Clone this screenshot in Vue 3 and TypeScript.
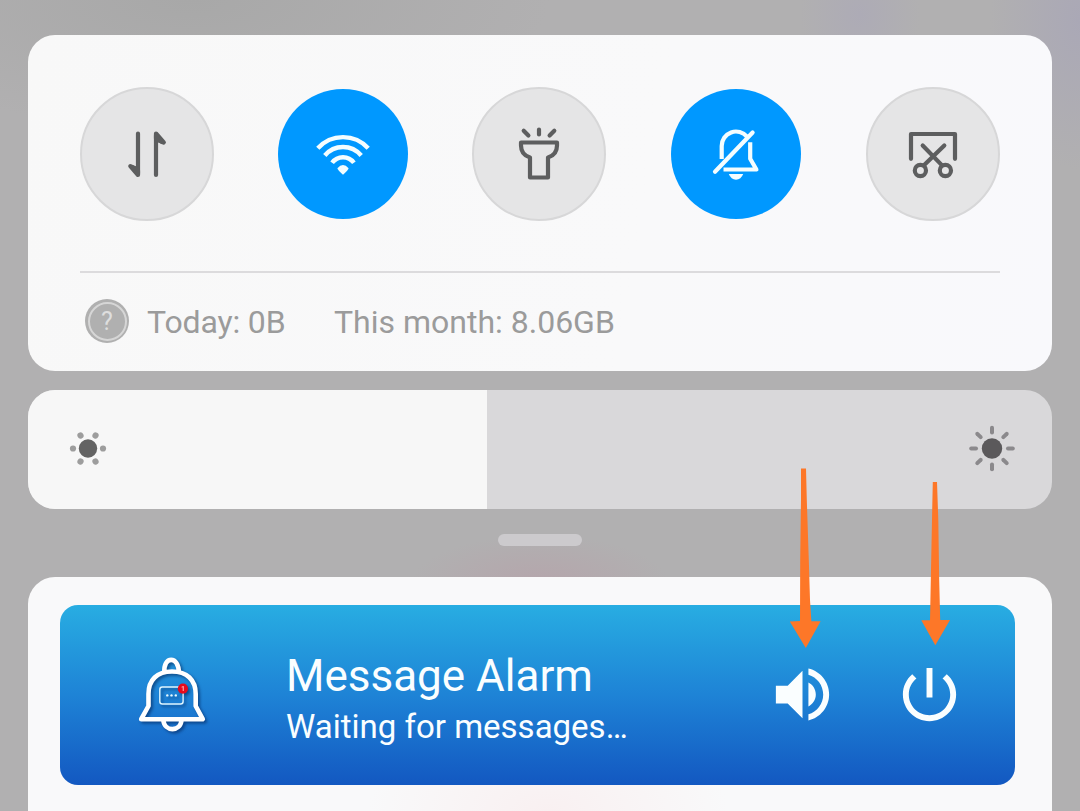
<script setup lang="ts">
import { ref } from 'vue'

interface Toggle {
  id: string
  on: boolean
}

const toggles = ref<Toggle[]>([
  { id: 'data', on: false },
  { id: 'wifi', on: true },
  { id: 'torch', on: false },
  { id: 'mute', on: true },
  { id: 'capture', on: false },
])

const brightness = ref(44.82)
const lowDots = [0, 60, 120, 180, 240, 300]
const rays = [0, 45, 90, 135, 180, 225, 270, 315]
</script>

<template>
  <main class="shade">
    <section class="card quick">
      <div class="toggles">
        <button
          v-for="t in toggles"
          :key="t.id"
          type="button"
          class="toggle"
          :class="{ on: t.on }"
          :aria-label="t.id"
          @click="t.on = !t.on"
        >
          <svg class="glyph" viewBox="-67 -67.5 134 134">
            <g v-if="t.id === 'data'">
              <path d="M-9 -21V20.5L-16.7 11.7L-9 15" />
              <path d="M-9 19L-15 12.5L-9 16Z" fill="currentColor" />
              <path d="M9 20.5V-21L16.8 -12L9 -15.5" />
              <path d="M9 -19L15 -12.5L9 -16Z" fill="currentColor" />
            </g>
            <g v-else-if="t.id === 'wifi'" class="wifi">
              <path d="M-25.2 -6.2A34 34 0 0 1 25.2 -6.2" />
              <path d="M-18.2 1A23.7 23.7 0 0 1 18.2 1" />
              <path d="M-10.9 8.3A13.4 13.4 0 0 1 10.9 8.3" />
              <path class="solid" d="M-5.6 13.8Q0 7.4 5.6 13.8Q5.4 15.6 0 20.2Q-5.4 15.6 -5.6 13.8Z" />
            </g>
            <g v-else-if="t.id === 'torch'">
              <path d="M-18 -12H18V-9C18 -2.5 14 1.5 9 3V23H-9V3C-14 1.5 -18 -2.5 -18 -9Z" />
              <path d="M0 -25V-20M-15.3 -23.8L-10.6 -19.1M15.3 -23.8L10.6 -19.1" />
            </g>
            <g v-else-if="t.id === 'mute'">
              <path d="M-21 17.3L16.6 -22" />
              <path class="butt" d="M-14.3 4.5V-8.5A14.3 14.3 0 0 1 11 -17.8" />
              <path class="butt" d="M14.2 -12.3V4.2L20.4 15H-12.5" />
              <path class="solid" d="M-7.2 19.6H7.2Q5 25.2 0 25.2T-7.2 19.6Z" />
            </g>
            <g v-else>
              <path d="M-22 4.3V-20.5H22V4.3" />
              <path d="M-10.3 -9L8.8 10.6M11.3 -9L-8.8 10.6" />
              <circle cx="-12.6" cy="16" r="5.6" />
              <circle cx="12.4" cy="16" r="5.6" />
            </g>
          </svg>
        </button>
      </div>
      <footer class="usage">
        <span class="help"><span class="help-disc">?</span></span>
        <span class="today">Today: 0B</span>
        <span class="month">This month: 8.06GB</span>
      </footer>
    </section>

    <section class="slider">
      <div class="level" :style="{ width: brightness + '%' }"></div>
      <div class="slider-icons">
        <svg class="sun" viewBox="-25 -24.5 50 50">
          <circle r="9.2" fill="#636363" />
          <circle v-for="a in lowDots" :key="a" cx="15" r="3.1" fill="#9d9d9d" :transform="`rotate(${a})`" />
        </svg>
        <svg class="sun" viewBox="-25 -24.5 50 50">
          <circle r="10.2" fill="#5b595b" />
          <path
            v-for="a in rays"
            :key="a"
            d="M16 0H20.8"
            stroke="#8b898c"
            stroke-width="4"
            stroke-linecap="round"
            :transform="`rotate(${a})`"
          />
        </svg>
      </div>
    </section>

    <div class="handle"></div>

    <section class="card notices">
      <article class="notice">
        <svg class="app-icon" viewBox="130 650 84 90">
          <g fill="none" stroke="#fff" stroke-width="4.6" stroke-linejoin="round">
            <path d="M164.5 673C162.5 655.5 179.5 655.5 178.8 673" />
            <path d="M141.2 719.2L148.5 706V694C148.5 680 157 671.5 172 671.5S195.7 680 195.7 694V706L202.8 719.2Z" />
            <path d="M163.3 720C164.5 732.2 180.5 732.2 181.5 720" />
          </g>
          <rect x="159.8" y="687" width="23.3" height="17" rx="2.5" fill="none" stroke="#dff6ff" stroke-width="1.4" />
          <g fill="#e8faff">
            <circle cx="167.3" cy="695.4" r="1.2" />
            <circle cx="171.5" cy="695.4" r="1.2" />
            <circle cx="175.8" cy="695.4" r="1.2" />
          </g>
          <circle cx="182.9" cy="688.7" r="5.1" fill="#e80a1c" />
          <text x="182.9" y="691.4" text-anchor="middle" class="count">1</text>
        </svg>
        <div class="copy">
          <h1 class="title">Message Alarm</h1>
          <p class="status">Waiting for messages…</p>
        </div>
        <svg class="action" viewBox="0 0 24 24">
          <path
            d="M3 9v6h4l5 5V4L7 9H3zm13.5 3c0-1.77-1.02-3.29-2.5-4.03v8.05c1.48-.73 2.5-2.25 2.5-4.02zM14 3.23v2.06c2.89.86 5 3.54 5 6.71s-2.11 5.85-5 6.71v2.06c4.01-.91 7-4.49 7-8.77s-2.99-7.86-7-8.77z"
          />
        </svg>
        <svg class="action power" viewBox="0 0 24 24">
          <path
            d="M13 3h-2v10h2V3zm4.83 2.17l-1.42 1.42C17.99 7.86 19 9.81 19 12c0 3.87-3.13 7-7 7s-7-3.13-7-7c0-2.19 1.01-4.14 2.58-5.42L6.17 5.17C4.23 6.82 3 9.26 3 12c0 4.97 4.03 9 9 9s9-4.03 9-9c0-2.74-1.23-5.18-3.17-6.83z"
          />
        </svg>
      </article>
    </section>

    <svg class="pointers" viewBox="780 460 180 195">
      <path d="M801 468.5H806L806.8 500L808.8 560L810 600L811.4 621.3H820.6L805.8 648L789.8 621.6L800 621L800.2 560L801 500Z" />
      <path d="M932.8 482H937L938.3 520L939.2 580L940.2 620H950L935.3 645.2L921.3 620.2H930L931.2 560L932.2 510Z" />
    </svg>
  </main>
</template>

<style>
body {
  margin: 0;
  overflow: hidden;
}
</style>

<style scoped>
.shade {
  position: relative;
  box-sizing: border-box;
  width: 1080px;
  height: 811px;
  padding: 35px 28px 0;
  overflow: hidden;
  display: flex;
  flex-direction: column;
  font-family: Roboto, "Liberation Sans", sans-serif;
  background:
    radial-gradient(ellipse 130px 50px at 540px 585px, #b5a5ab 0%, rgba(177, 176, 177, 0) 100%),
    radial-gradient(ellipse 60px 70px at 860px 15px, #adabb6 0%, rgba(177, 176, 177, 0) 100%),
    radial-gradient(ellipse 90px 150px at 1080px 20px, #aaa8b6 0%, rgba(177, 176, 177, 0) 100%),
    radial-gradient(ellipse 360px 130px at 190px 0, #a8a8a8 0%, rgba(177, 176, 177, 0) 100%),
    #b1b0b1;
}

.card {
  background: #f9f9fa;
}

.quick {
  flex: none;
  box-sizing: border-box;
  height: 336px;
  padding: 52px 52px 0;
  border-radius: 27px;
  background: linear-gradient(100deg, #f8f8f8, #f9f9fa 60%, #f9f9fc);
}

.toggles {
  display: grid;
  grid-template-columns: 196px 196px 197px 197px 134px;
  height: 184px;
  border-bottom: 2px solid #dcdbdd;
}

.toggle {
  display: flex;
  align-items: center;
  justify-content: center;
  box-sizing: border-box;
  width: 134px;
  height: 134px;
  padding: 0;
  border: 2px solid #d7d7d8;
  border-radius: 50%;
  background: #e5e5e6;
  color: #5d5e5f;
}

.toggle.on {
  border-color: transparent;
  background: #0098ff;
  background-clip: padding-box;
  color: #f4fdff;
}

.glyph {
  flex: none;
  width: 134px;
  height: 134px;
  fill: none;
  stroke: currentColor;
  stroke-width: 4.2;
  stroke-linecap: round;
  stroke-linejoin: round;
}

.wifi,
.butt {
  stroke-linecap: butt;
}

.wifi {
  stroke-width: 4.4;
}

.solid {
  fill: currentColor;
  stroke: none;
}

.usage {
  display: flex;
  align-items: center;
  height: 97px;
  padding-left: 5px;
  font-size: 32px;
  color: #9b9b9b;
}

.help {
  display: flex;
  align-items: center;
  justify-content: center;
  width: 44px;
  height: 44px;
  margin-top: -1px;
  border-radius: 50%;
  background: #b0b0b0;
}

.help-disc {
  width: 35px;
  height: 35px;
  border: 2px solid #d6d6d6;
  border-radius: 50%;
  font-size: 25px;
  line-height: 36px;
  text-align: center;
  color: #dedede;
}

.today {
  width: 187px;
  margin-left: 18px;
  letter-spacing: -0.15px;
}

.month {
  letter-spacing: 0;
}

.slider {
  position: relative;
  flex: none;
  height: 119px;
  margin-top: 19px;
  overflow: hidden;
  border-radius: 27px;
  background: #d9d8da;
}

.level {
  height: 100%;
  background: #f7f7f7;
}

.slider-icons {
  position: absolute;
  inset: 0;
  display: flex;
  align-items: center;
  justify-content: space-between;
  padding: 0 35px 1px;
}

.sun {
  width: 50px;
  height: 50px;
}

.handle {
  flex: none;
  align-self: center;
  width: 84px;
  height: 12px;
  margin-top: 25px;
  border-radius: 6px;
  background: #cccacd;
}

.notices {
  flex: none;
  height: 206px;
  margin-top: 31px;
  padding: 28px 37px 0 32px;
  border-radius: 27px 27px 0 0;
  background: radial-gradient(ellipse 180px 90px at 520px 234px, #f9f0f1, rgba(249, 249, 250, 0)), #f9f9fa;
}

.notice {
  display: flex;
  align-items: center;
  box-sizing: border-box;
  height: 180px;
  padding: 0 50px 0 70px;
  border-radius: 18px;
  background: linear-gradient(#28ade2, #1e83d6 50%, #1358c1);
  color: #fafeff;
}

.app-icon {
  flex: none;
  width: 84px;
  height: 90px;
  filter: drop-shadow(2px 2px 1.5px rgba(0, 30, 80, 0.55));
}

.count {
  font-size: 7px;
  font-weight: 700;
  fill: #ffb4b4;
}

.copy {
  flex: 1;
  margin-left: 72px;
  padding-top: 11px;
  white-space: nowrap;
}

.title,
.status {
  margin: 0;
  font-weight: 400;
}

.title {
  font-size: 44px;
  line-height: 52px;
}

.status {
  font-size: 33px;
  line-height: 50px;
}

.action {
  flex: none;
  width: 71px;
  height: 71px;
  margin-bottom: 1px;
  fill: #fafeff;
}

.power {
  margin-left: 56px;
}

.pointers {
  position: absolute;
  left: 780px;
  top: 460px;
  width: 180px;
  height: 195px;
  fill: #fd7728;
}
</style>
